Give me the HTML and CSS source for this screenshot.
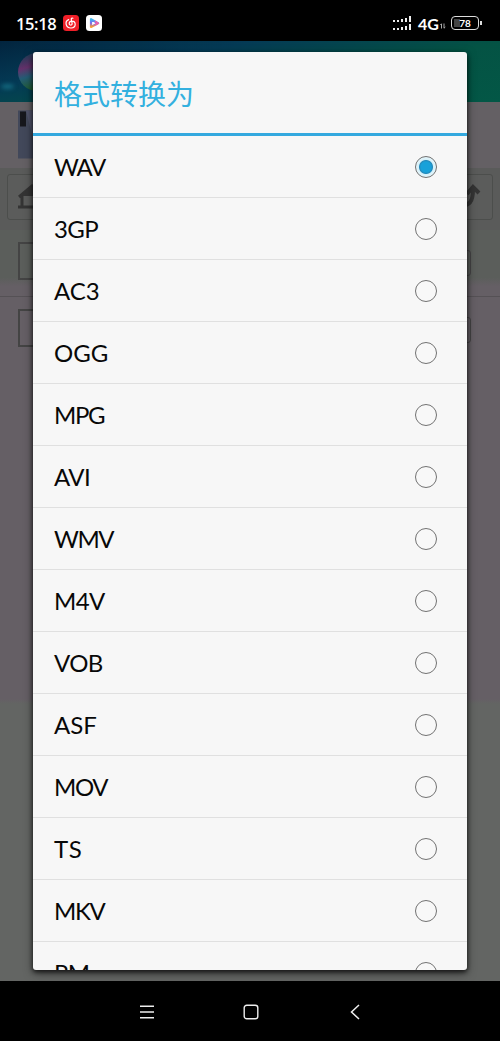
FILE: index.html
```html
<!DOCTYPE html>
<html lang="zh-CN">
<head>
<meta charset="utf-8">
<title>格式转换为</title>
<link rel="stylesheet" href="styles.css">
</head>
<body>
<header class="status">
  <span class="clock">15:18</span>
  <svg class="app-icon" viewBox="0 0 16 16"><rect width="16" height="16" rx="3.5" fill="#f01f28"/><path d="M9.9 3.2C8.8 2.8 8.1 3.5 8.3 4.4L9.1 8.4C9.4 10.5 6.2 10.6 6.2 8.5C6.2 6.8 7.4 6.1 9 6.1C13 6.2 13.8 12.9 8 13C2.2 12.9 1.7 6.2 5.6 4.6" fill="none" stroke="#fff" stroke-width="1.2" stroke-linecap="round"/></svg>
  <svg class="app-icon" viewBox="0 0 16 16"><defs><linearGradient id="play" x2="0" y2="1"><stop stop-color="#36b9ee"/><stop offset=".5" stop-color="#8068f2"/><stop offset="1" stop-color="#ffa12c"/></linearGradient></defs><rect width="16" height="16" rx="3.5" fill="#fff"/><path d="M5 4.2v7.8l7-3.8z" fill="none" stroke="url(#play)" stroke-width="2.2" stroke-linejoin="round"/><path d="M9 6.2l3 2-3 1.8" fill="none" stroke="#f160a5" stroke-width="1.6"/></svg>
  <span class="spacer"></span>
  <svg class="signal" viewBox="0 0 19 15"><g fill="#eee"><path d="M0 4h2v2H0zM4 4h2v2H4zM8 3h2v3H8zM12 2h2v4h-2zM16 0h2v6h-2zM0 12h2v2H0zM4 12h2v2H4zM8 11h2v3H8zM12 10h2v4h-2zM16 8h2v6h-2z"/></g></svg>
  <span class="network">4G</span>
  <svg class="traffic" viewBox="0 0 6 6"><path d="M1.5 5.5V.8L.3 2M4 .5v4.7L5.3 4" fill="none" stroke="#bbb" stroke-width=".9"/></svg>
  <span class="battery"><i class="battery-level"></i><b>78</b></span>
</header>
<main class="stage">
  <section class="app">
    <div class="banner">
      <i class="glow"></i>
      <i class="disc"></i>
    </div>
    <div class="device"><svg class="phone" viewBox="0 0 30 48"><rect width="30" height="48" fill="#42485a"/><rect x="2" y="1" width="6" height="15" fill="#16171c"/><path d="M8 0l12 48h10V0z" fill="#50536a"/></svg></div>
    <div class="tools">
      <div class="tool"><svg viewBox="0 0 30 26"><path d="M1 13L14 2l13 11M4 12v11M0 23h28" fill="none" stroke="#343434" stroke-width="3"/><path d="M3 12L14 2l12 10z" fill="#343434"/></svg></div>
      <div class="tool tool-right"><svg viewBox="0 0 30 26"><path d="M6 21c12 2 15-4 15-15M15 10l6-7 6 6" fill="none" stroke="#343434" stroke-width="4"/></svg></div>
    </div>
    <div class="entry entry-active"><i class="thumb"></i><i class="chip"></i></div>
    <div class="entry entry-second"><i class="thumb"></i><i class="chip"></i></div>
    <div class="blank"></div>
  </section>
  <section class="dialog">
    <h1 class="title">格式转换为</h1>
    <ul class="formats">
      <li class="format"><span class="tight">WAV</span><i class="radio selected"></i></li>
      <li class="format"><span class="snug">3GP</span><i class="radio"></i></li>
      <li class="format"><span>AC3</span><i class="radio"></i></li>
      <li class="format"><span>OGG</span><i class="radio"></i></li>
      <li class="format"><span class="tight">MPG</span><i class="radio"></i></li>
      <li class="format"><span class="snug">AVI</span><i class="radio"></i></li>
      <li class="format"><span class="tight">WMV</span><i class="radio"></i></li>
      <li class="format"><span class="snug">M4V</span><i class="radio"></i></li>
      <li class="format"><span class="snug">VOB</span><i class="radio"></i></li>
      <li class="format"><span>ASF</span><i class="radio"></i></li>
      <li class="format"><span class="tight">MOV</span><i class="radio"></i></li>
      <li class="format"><span class="loose">TS</span><i class="radio"></i></li>
      <li class="format"><span class="tight">MKV</span><i class="radio"></i></li>
      <li class="format"><span class="tight">RM</span><i class="radio"></i></li>
    </ul>
  </section>
</main>
<nav class="nav">
  <svg viewBox="0 0 16 16"><path d="M1 2.2h14M1 8h14M1 13.8h14" stroke="#eee" stroke-width="1.4"/></svg>
  <svg viewBox="0 0 16 16"><rect x="1.2" y="1.2" width="13.6" height="13.6" rx="2.6" fill="none" stroke="#eee" stroke-width="1.4"/></svg>
  <svg viewBox="0 0 16 16"><path d="M12 1L4.5 8l7.5 7" fill="none" stroke="#eee" stroke-width="1.5"/></svg>
</nav>
</body>
</html>
```
FILE: styles.css
```css
* { box-sizing: border-box; }
body {
  margin: 0;
  width: 500px;
  height: 1041px;
  display: flex;
  flex-direction: column;
  overflow: hidden;
  background: #000;
  font-family: Lato, "Noto Sans CJK SC", sans-serif;
}
.status {
  height: 41px;
  flex: none;
  display: flex;
  align-items: center;
  padding: 5px 21px 0 16px;
  color: #fff;
}
.clock { width: 47px; font: 600 16.5px "Open Sans", sans-serif; letter-spacing: -.4px; }
.app-icon { width: 16px; height: 16px; margin-right: 7px; }
.spacer { flex: 1; }
.signal { width: 19px; height: 15px; margin-right: 6px; }
.network { font: bold 16px Lato, sans-serif; }
.traffic { width: 6px; height: 6px; margin: 6px 5px 0 1px; }
.battery {
  width: 28px;
  height: 14px;
  position: relative;
  display: flex;
  align-items: center;
  justify-content: center;
  border: 1.5px solid #ddd;
  border-radius: 4px;
  font-size: 10px;
}
.battery::after {
  content: "";
  position: absolute;
  right: -4px;
  top: 4px;
  width: 2px;
  height: 4px;
  background: #ddd;
}
.battery-level { position: absolute; left: 2px; top: 2px; width: 6px; height: 8px; background: #444; }
.battery b { position: relative; }
.stage { height: 940px; flex: none; position: relative; overflow: hidden; }
.app { height: 100%; display: flex; flex-direction: column; background: #646064; }
.banner {
  height: 61px;
  flex: none;
  position: relative;
  overflow: hidden;
  background: linear-gradient(170deg, #02243e 0%, #043a55 30%, #045344 60%, #035746 100%);
}
.glow { position: absolute; left: 1px; top: 43px; width: 13px; height: 5px; border-radius: 50%; background: #146a80; filter: blur(2px); }
.disc {
  position: absolute;
  left: 18px;
  top: 12px;
  width: 38px;
  height: 38px;
  border-radius: 50%;
  background: linear-gradient(165deg, #283a58 10%, #64316b 35%, #245c75 55%, #205c2c 85%);
}
.device { height: 66px; flex: none; padding: 8px 18px; background: #646064; }
.phone { display: block; width: 30px; height: 49px; }
.tools {
  height: 62px;
  flex: none;
  display: flex;
  justify-content: space-between;
  padding: 6px 7px 9px;
  background: #5a5b5a;
}
.tool {
  width: 90px;
  height: 46px;
  padding: 9px 10px;
  border: 1px solid #4c4e4c;
  border-radius: 3px;
  background: #5b5c5b;
}
.tool svg { display: block; width: 30px; height: 26px; }
.tool-right { display: flex; justify-content: flex-end; }
.entry {
  height: 67px;
  flex: none;
  display: flex;
  justify-content: space-between;
  padding: 12px 29px 0 18px;
  border-bottom: 1px solid #555155;
  background: #655f65;
}
.entry-active { background: linear-gradient(#5b5e5b 72%, #655f65 85%); }
.entry-second { border: 0; }
.thumb { width: 36px; height: 38px; border: 2px solid #444; }
.chip { width: 30px; height: 26px; margin-top: 8px; border: 1px solid #474547; border-radius: 3px; }
.blank { flex: 1; background: linear-gradient(#655f65 0 335px, #636563 340px); }
.dialog {
  position: absolute;
  left: 33px;
  top: 11px;
  width: 434px;
  height: 918px;
  overflow: hidden;
  background: #f7f7f7;
  border-radius: 3px;
  box-shadow: 0 2px 4px rgba(0,0,0,.65), 0 3px 10px rgba(0,0,0,.5);
}
.title {
  margin: 0;
  height: 84px;
  padding-left: 21px;
  border-bottom: 3px solid #34a9df;
  color: #33b0df;
  font: 400 28px/82px "Noto Sans CJK SC", sans-serif;
}
.formats { margin: 0; padding: 0; list-style: none; }
.format {
  height: 62px;
  display: flex;
  align-items: center;
  justify-content: space-between;
  padding: 1px 30px 0 21px;
  border-bottom: 1px solid #e0e0e0;
  color: #080808;
  font-size: 24px;
}
.format span { padding-bottom: 2px; }
.tight { letter-spacing: -1.4px; }
.snug { letter-spacing: -.6px; }
.loose { letter-spacing: .6px; }
.radio {
  width: 22px;
  height: 22px;
  border: 1px solid #727272;
  border-radius: 50%;
  background: #f8f8f8;
}
.selected { background: radial-gradient(circle, #17a1da 0 5px, #258abb 6.5px, #d6f1fa 7.5px, #e5f5fa 10px); }
.nav { height: 60px; display: flex; align-items: center; padding: 2px 137px 0 139px; justify-content: space-between; }
.nav svg { width: 16px; height: 16px; }
```
